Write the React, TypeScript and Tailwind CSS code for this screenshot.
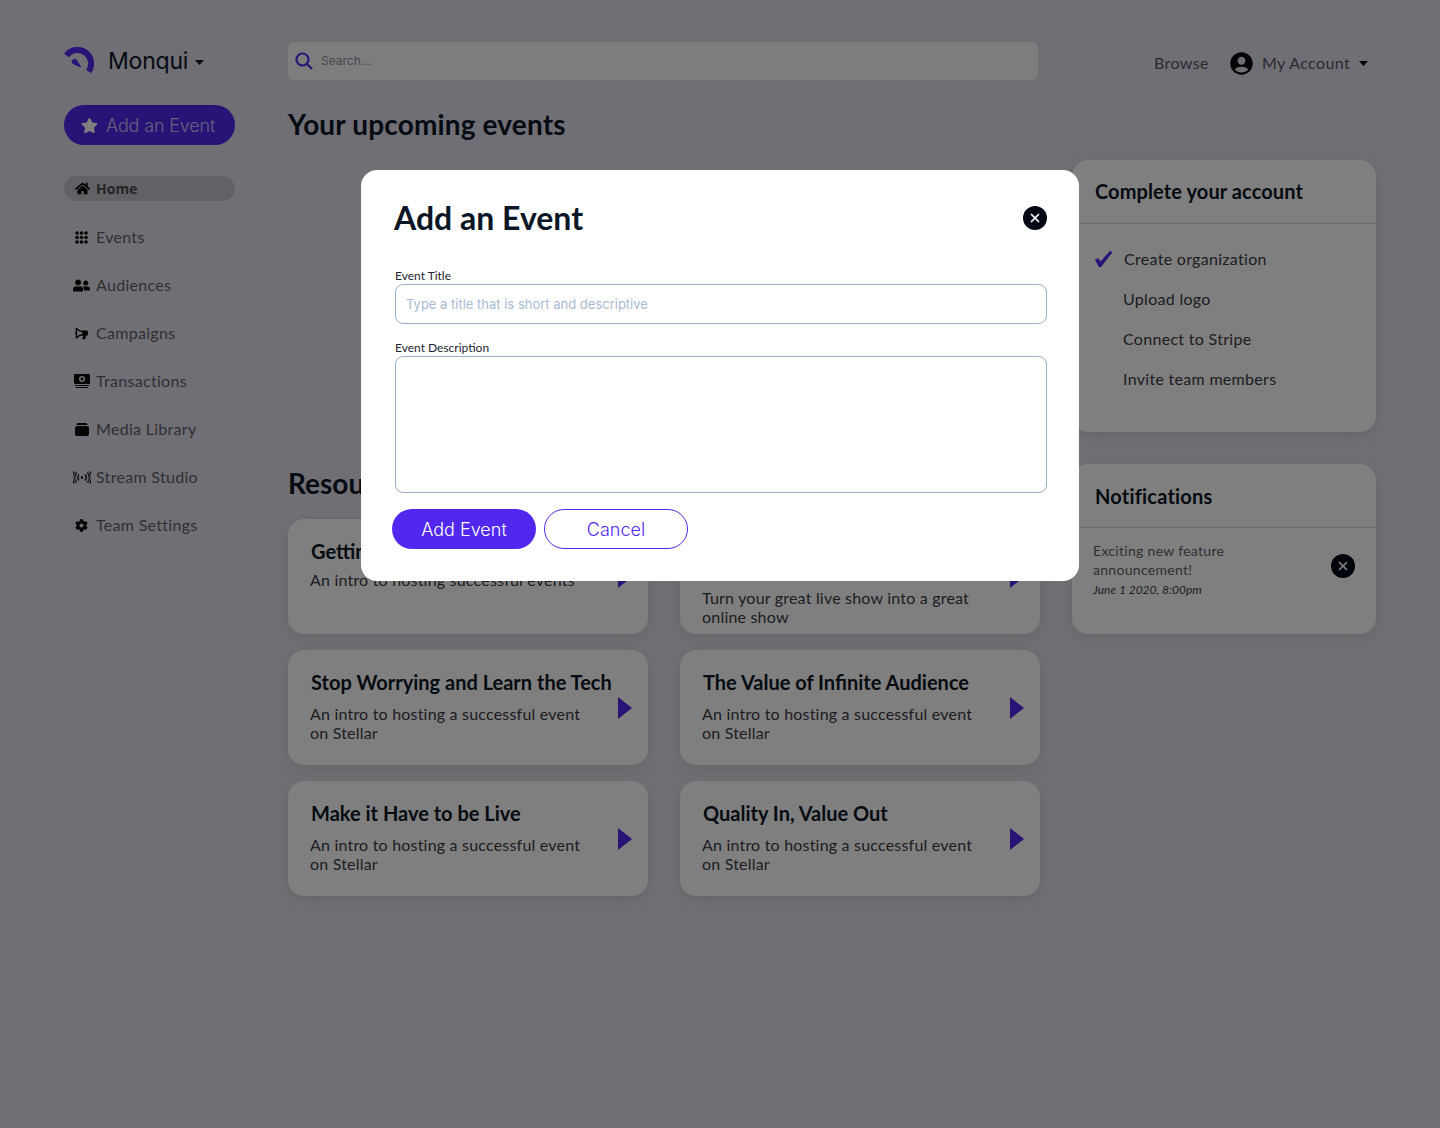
import React from 'react';
import { FaBullhorn, FaCog, FaHome, FaStar, FaUserFriends } from 'react-icons/fa';
import { MdAccountCircle } from 'react-icons/md';
import { X } from 'lucide-react';

const Caret = () => (
  <svg width="9" height="5" viewBox="0 0 9 5" className="shrink-0">
    <path d="M0 0h9L4.5 5z" fill="currentColor" />
  </svg>
);

const Logo = () => (
  <svg width="30" height="28" viewBox="0 0 30 28" fill="none">
    <path d="M2.5 8.5A12 12 0 1 1 24.5 24.5" stroke="#5227ee" strokeWidth="6" />
    <path d="M8 13.5a3.4 3.4 0 0 1 4.6-1l5 8.2-7.6-3.2a3.2 3.2 0 0 1-2-4z" fill="#5227ee" />
  </svg>
);

const DotsIcon = () => (
  <svg width="13" height="13" viewBox="0 0 13 13" fill="currentColor">
    {[2, 6.5, 11].map((y) => [2, 6.5, 11].map((x) => <circle key={`${x}-${y}`} cx={x} cy={y} r="1.8" />))}
  </svg>
);

const MoneyIcon = () => (
  <svg width="16" height="14" viewBox="0 0 16 14" fill="currentColor">
    <path fillRule="evenodd" d="M1 0h14a1 1 0 0 1 1 1v8a1 1 0 0 1-1 1H1a1 1 0 0 1-1-1V1a1 1 0 0 1 1-1zm7 2a3 3 0 1 0 0 6 3 3 0 0 0 0-6z" />
    <circle cx="8" cy="5" r="1.4" />
    <path d="M1 11h14v1H1zM2 13h12v1H2z" />
  </svg>
);

const CaseIcon = () => (
  <svg width="14" height="13" viewBox="0 0 14 13" fill="currentColor">
    <path d="M3 0h8a1.5 1.5 0 0 1 1.5 1.5V2H1.5v-.5A1.5 1.5 0 0 1 3 0z" />
    <rect x="0" y="3" width="14" height="10" rx="2" />
  </svg>
);

const StreamIcon = () => (
  <svg width="18" height="13" viewBox="0 0 18 13" fill="none" stroke="currentColor" strokeWidth="1.3">
    <circle cx="9" cy="6.5" r="1.2" fill="currentColor" stroke="none" />
    <path d="M6 3.5a4.5 4.5 0 0 0 0 6M12 3.5a4.5 4.5 0 0 1 0 6" />
    <path d="M3.6 1.5a8 8 0 0 0 0 10M14.4 1.5a8 8 0 0 1 0 10" />
    <path d="M1.4 .5a11 11 0 0 0 0 12M16.6 .5a11 11 0 0 1 0 12" />
  </svg>
);

const Arrow = () => (
  <svg width="14" height="22" viewBox="0 0 14 22" className="absolute right-4 top-1/2 -translate-y-1/2">
    <path d="M0 0l14 11L0 22z" fill="#5227ee" />
  </svg>
);

const CloseButton = () => (
  <span className="flex h-6 w-6 items-center justify-center rounded-full bg-[#020814] text-white">
    <X size={14} strokeWidth={3} />
  </span>
);

const navItems = [
  { label: 'Events', icon: <DotsIcon /> },
  { label: 'Audiences', icon: <FaUserFriends size={17} /> },
  { label: 'Campaigns', icon: <FaBullhorn size={13} className="-scale-x-100" /> },
  { label: 'Transactions', icon: <MoneyIcon /> },
  { label: 'Media Library', icon: <CaseIcon /> },
  { label: 'Stream Studio', icon: <StreamIcon /> },
  { label: 'Team Settings', icon: <FaCog size={13} /> },
];

const resources = [
  { title: 'Getting started with online events', text: 'An intro to hosting successful events' },
  { title: '', text: 'Turn your great live show into a great online show' },
  { title: 'Stop Worrying and Learn the Tech', text: 'An intro to hosting a successful event on Stellar' },
  { title: 'The Value of Infinite Audience', text: 'An intro to hosting a successful event on Stellar' },
  { title: 'Make it Have to be Live', text: 'An intro to hosting a successful event on Stellar' },
  { title: 'Quality In, Value Out', text: 'An intro to hosting a successful event on Stellar' },
];

const todo = ['Upload logo', 'Connect to Stripe', 'Invite team members'];

const Sidebar = () => (
  <aside className="mr-[53px] w-[171px] shrink-0">
    <div className="flex h-[38px] items-center">
      <Logo />
      <span className="ml-[14px] text-[23px] text-[#0b1626] font-['Inter',sans-serif] tracking-[-0.2px]">Monqui</span>
      <span className="ml-[7px] mt-[3px] text-[#0b1626]"><Caret /></span>
    </div>
    <button className="mt-[25px] flex h-10 w-full items-center rounded-full bg-[#5227ee] pl-[17px] text-[18px] font-light text-white font-['Inter',sans-serif]">
      <FaStar size={17} className="mr-2" />
      <span className="opacity-70 tracking-[-0.15px]">Add an Event</span>
    </button>
    <nav className="mt-[31px] flex flex-col gap-6 text-[16px] text-[#5e5e68]">
      <a className="flex h-[25px] items-center rounded-full bg-[#c4c4cc] font-bold text-[#4a4a50]">
        <span className="flex w-8 justify-center pl-[4px] text-[#050505]"><FaHome size={15} /></span>
        <span className="font-['Open_Sans',sans-serif] text-[14px]">Home</span>
      </a>
      {navItems.map((item) => (
        <a key={item.label} className="flex h-6 items-center">
          <span className="flex w-8 justify-center pl-[3px] text-[#0a0a0a]">{item.icon}</span>
          <span className="tracking-[0.3px]">{item.label}</span>
        </a>
      ))}
    </nav>
  </aside>
);

const ResourceCard = ({ title, text }: { title: string; text: string }) => (
  <div className="relative h-[115px] rounded-2xl bg-white pl-[22px] pr-[50px] pt-5 shadow-[0_4px_16px_rgba(0,0,0,0.1)]">
    <h3 className={`${title ? 'ml-px w-[320px]' : 'invisible'} min-h-6 text-[20px] font-bold leading-6 text-[#0b1626]`}>{title}</h3>
    <p className={`${title.length > 32 ? 'mt-[7px]' : 'mt-[10px]'} text-[16px] leading-[19px] tracking-[0.2px] text-[#3b3b44] ${title ? '' : 'mt-[25px]'}`}>{text}</p>
    <Arrow />
  </div>
);

const Main = () => (
  <main className="mr-8 w-[752px] shrink-0">
    <div className="flex h-[38px] w-[750px] items-center rounded-md bg-[#fbfbfd] pl-[7px]">
      <svg width="18" height="18" viewBox="0 0 18 18" fill="none" stroke="#5227ee" strokeWidth="2.2">
        <circle cx="7.5" cy="7.5" r="6" />
        <path d="M12 12l5 5" />
      </svg>
      <span className="ml-[8px] text-[12px] text-[#8d93a5] font-['Inter',sans-serif]">Search...</span>
    </div>
    <h1 className="mt-[26px] text-[28px] font-bold leading-9 text-[#0b1626] tracking-[0.15px]">Your upcoming events</h1>
    <h2 className="mt-[323px] text-[28px] font-bold leading-9 text-[#0b1626]">Resources</h2>
    <div className="mt-[18px] grid grid-cols-[360px_360px] gap-x-8 gap-y-4">
      {resources.map((r, i) => (
        <ResourceCard key={i} title={r.title} text={r.text} />
      ))}
    </div>
  </main>
);

const RightColumn = () => (
  <div className="w-[304px] shrink-0">
    <div className="flex h-[42px] items-center pb-0 text-[16px] tracking-[0.4px] text-[#55555e]">
      <span className="ml-[82px]">Browse</span>
      <MdAccountCircle size={27} className="ml-[19px] text-[#0a0a0f]" />
      <span className="ml-[7px]">My Account</span>
      <span className="ml-[9px] text-[#020202]"><Caret /></span>
    </div>
    <section className="mt-[76px] h-[272px] rounded-2xl bg-white shadow-[0_4px_16px_rgba(0,0,0,0.1)]">
      <div className="flex h-[64px] items-center border-b border-[#d8d8de] pb-[2px] pl-[23px]">
        <h3 className="text-[20px] font-bold text-[#0b1626] tracking-[0.1px]">Complete your account</h3>
      </div>
      <ul className="pl-[23px] pt-[15px] text-[16px] leading-10 tracking-[0.3px] text-[#3b3b44]">
        <li className="flex items-center">
          <svg width="18" height="16" viewBox="0 0 18 16" className="mr-[11px]">
            <path d="M0 9l3-2 2.5 3.5L15 0l2.5 1.2L6 16h-2z" fill="#5227ee" />
          </svg>
          Create organization
        </li>
        {todo.map((t) => (
          <li key={t} className="pl-7">{t}</li>
        ))}
      </ul>
    </section>
    <section className="mt-8 h-[170px] rounded-2xl bg-white shadow-[0_4px_16px_rgba(0,0,0,0.1)]">
      <div className="flex h-[64px] items-center border-b border-[#d8d8de] pl-[23px]">
        <h3 className="text-[20px] font-bold text-[#0b1626] tracking-[0.2px]">Notifications</h3>
      </div>
      <div className="flex items-center pl-[21px] pr-[21px] pt-[13px]">
        <div className="w-[180px]">
          <p className="text-[14px] leading-[19px] tracking-[0.3px] text-[#5e5e68]">Exciting new feature announcement!</p>
          <p className="mt-[2px] text-[12px] italic leading-[17px] text-[#3b3b44]">June 1 2020, 8:00pm</p>
        </div>
        <span className="ml-auto mb-[7px]"><CloseButton /></span>
      </div>
    </section>
  </div>
);

const Modal = () => (
  <div className="fixed inset-0 flex justify-center bg-black/50 pt-[170px]">
    <div className="h-[411px] w-[718px] rounded-2xl bg-white pl-[34px] pr-8 pt-[30px]">
      <div className="flex h-9 items-center justify-between">
        <h2 className="-ml-px text-[32px] font-bold text-[#0b1626]">Add an Event</h2>
        <CloseButton />
      </div>
      <label className="mt-[32px] block text-[12px] leading-4 text-[#1d2430]">Event Title</label>
      <input
        placeholder="Type a title that is short and descriptive"
        className="block h-10 w-[652px] rounded-lg border border-[#9ab0cc] px-[10px] text-[13px] font-['Inter',sans-serif] placeholder:text-[#a9bad2] outline-none"
      />
      <label className="mt-4 block text-[12px] leading-4 text-[#1d2430]">Event Description</label>
      <textarea className="block h-[137px] w-[652px] resize-none rounded-lg border border-[#9ab0cc] outline-none" />
      <div className="-ml-[3px] mt-4 flex gap-2 font-['Inter',sans-serif] text-[18px] font-light">
        <button className="h-10 w-36 rounded-full bg-[#5227ee] text-white">Add Event</button>
        <button className="h-10 w-36 rounded-full border border-[#5227ee] text-[#5227ee]">Cancel</button>
      </div>
    </div>
  </div>
);

export default function App() {
  return (
    <div className="relative min-h-[1128px] bg-[#dfdfea] font-['Lato',sans-serif]">
      <div className="flex pl-16 pt-[42px]">
        <Sidebar />
        <Main />
        <RightColumn />
      </div>
      <Modal />
    </div>
  );
}
